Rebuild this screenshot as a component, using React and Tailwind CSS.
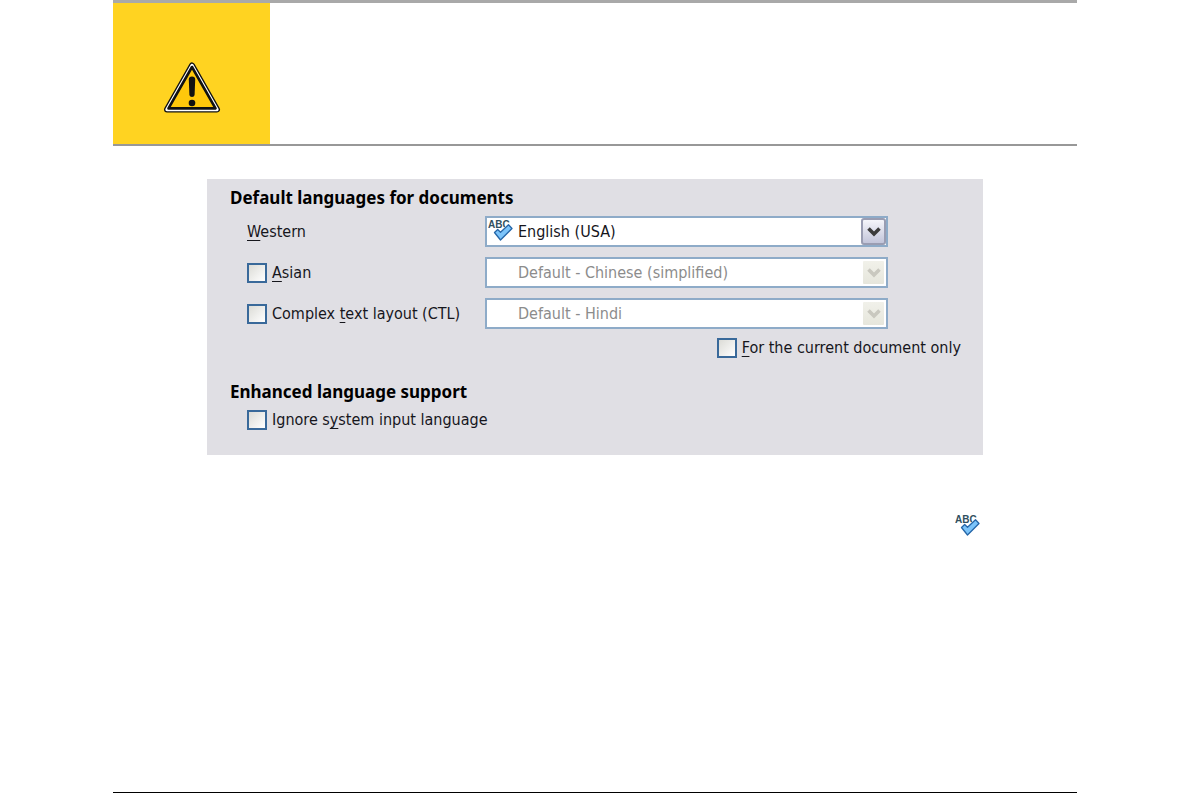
import { useState } from "react";

function WarningIcon() {
  return (
    <svg width="58" height="52" viewBox="0 0 58 52" role="img" aria-label="Warning">
      <path
        d="M29 3.5 L54 47.5 L4 47.5 Z"
        fill="#ffc80b"
        stroke="#111"
        strokeWidth="6"
        strokeLinejoin="round"
      />
      <path
        d="M29 3.5 L54 47.5 L4 47.5 Z"
        fill="none"
        stroke="#fff"
        strokeWidth="3.4"
        strokeLinejoin="round"
      />
      <path
        d="M29 5 L52.5 46.4 L5.5 46.4 Z"
        fill="#ffc80b"
        stroke="#111"
        strokeWidth="2.6"
        strokeLinejoin="round"
      />
      <path
        d="M25.8 17.5 Q25.8 14.5 29 14.5 Q32.2 14.5 32.2 17.5 L31.6 33 Q31.2 35 29 35 Q26.8 35 26.4 33 Z"
        fill="#111"
      />
      <circle cx="29" cy="41" r="3.3" fill="#111" />
    </svg>
  );
}

function SpellIcon() {
  return (
    <svg width="25" height="24" viewBox="0 0 25 24" role="img" aria-label="Spellcheck available">
      <text
        x="0"
        y="10"
        fontFamily="Liberation Sans, sans-serif"
        fontSize="10"
        fontWeight="700"
        fill="#31505f"
      >
        ABC
      </text>
      <path
        d="M6.5 14.5 L9.7 11.5 L12.5 14.2 L20.5 6.8 L24 10.5 L12.5 22 Z"
        fill="#7cc4fa"
        stroke="#fff"
        strokeWidth="2.2"
        strokeLinejoin="round"
      />
      <path
        d="M6.5 14.5 L9.7 11.5 L12.5 14.2 L20.5 6.8 L24 10.5 L12.5 22 Z"
        fill="#7cc4fa"
        stroke="#2566a8"
        strokeWidth="1.3"
        strokeLinejoin="round"
      />
    </svg>
  );
}

function Arrow({ disabled }) {
  return (
    <span
      className={`pointer-events-none absolute inset-y-0 right-0 flex w-[25px] items-center justify-center rounded-[3px] border-2 bg-linear-to-b ${
        disabled
          ? "border-white from-[#f1f1ea] to-[#e6e6dc] text-[#c9c8bf]"
          : "border-[#9a9db2] from-[#f5f5fa] to-[#c3c5da] text-[#3c3c3c]"
      }`}
    >
      <svg width="14" height="10" viewBox="0 0 14 10" fill="none" stroke="currentColor" strokeWidth="3.6">
        <path d="M1.5 1.5 L7 7 L12.5 1.5" />
      </svg>
    </span>
  );
}

function LanguageSelect({ id, value, disabled, spellcheck }) {
  return (
    <div className="relative h-[31px] border-2 border-[#8eabc8] bg-white">
      <select
        id={id}
        aria-label={id}
        disabled={disabled}
        className="block h-full w-full appearance-none bg-white pr-7 pl-[31px] text-[#16161c] opacity-100 disabled:text-[#8c8c8c]"
      >
        <option>{value}</option>
      </select>
      {spellcheck && (
        <span className="pointer-events-none absolute top-0 left-px">
          <SpellIcon />
        </span>
      )}
      <Arrow disabled={disabled} />
    </div>
  );
}

function Check({ id, checked, onChange, children }) {
  return (
    <label htmlFor={id} className="flex items-center gap-[5px]">
      <input
        id={id}
        type="checkbox"
        checked={checked}
        onChange={onChange}
        className="size-5 shrink-0 appearance-none border-2 border-[#39699a] bg-linear-to-br from-[#dcdcd7] to-white checked:bg-[#39699a] checked:bg-none"
      />
      <span>{children}</span>
    </label>
  );
}

function Heading({ children }) {
  return (
    <h2 className="font-['Noto_Sans',sans-serif] text-[17px] leading-6 font-bold text-black">
      {children}
    </h2>
  );
}

function Key({ children }) {
  return <span className="underline decoration-1 underline-offset-3">{children}</span>;
}

export default function App() {
  const [options, setOptions] = useState({
    asian: false,
    ctl: false,
    current: false,
    ignore: false,
  });

  const toggle = (name) => () =>
    setOptions((prev) => ({ ...prev, [name]: !prev[name] }));

  return (
    <div className="flex min-h-screen flex-col bg-white px-[113px] font-['DejaVu_Sans_Condensed','Noto_Sans',sans-serif] text-[16px] leading-6 text-[#16161c]">
      <header className="border-t-[3px] border-b-2 border-t-[#a9a9a9] border-b-[#989898]">
        <div className="flex h-[141px] w-[157px] justify-center bg-[#ffd321] pt-[59px]">
          <WarningIcon />
        </div>
      </header>

      <main className="px-[94px] pt-[33px]">
        <form className="bg-[#e0dfe4] pt-[7px] pr-[22px] pb-[23px] pl-[23px]">
          <Heading>Default languages for documents</Heading>

          <div className="mt-[6px] mr-[73px] ml-[17px] grid grid-cols-[238px_1fr] items-center gap-y-[10px]">
            <label htmlFor="western">
              <Key>W</Key>estern
            </label>
            <LanguageSelect id="western" value="English (USA)" spellcheck />

            <Check id="asian" checked={options.asian} onChange={toggle("asian")}>
              <Key>A</Key>sian
            </Check>
            <LanguageSelect
              id="asian-language"
              value="Default - Chinese (simplified)"
              disabled={!options.asian}
            />

            <Check id="ctl" checked={options.ctl} onChange={toggle("ctl")}>
              Complex <Key>t</Key>ext layout (CTL)
            </Check>
            <LanguageSelect
              id="ctl-language"
              value="Default - Hindi"
              disabled={!options.ctl}
            />
          </div>

          <div className="mt-[7px] flex justify-end">
            <Check id="current" checked={options.current} onChange={toggle("current")}>
              <Key>F</Key>or the current document only
            </Check>
          </div>

          <div className="mt-5">
            <Heading>Enhanced language support</Heading>
          </div>
          <div className="mt-1 ml-[17px]">
            <Check id="ignore" checked={options.ignore} onChange={toggle("ignore")}>
              Ignore s<Key>y</Key>stem input language
            </Check>
          </div>
        </form>

        <div className="mt-[58px] flex justify-end pr-[3px]">
          <SpellIcon />
        </div>
      </main>

      <footer className="mt-auto border-t border-black" />
    </div>
  );
}
